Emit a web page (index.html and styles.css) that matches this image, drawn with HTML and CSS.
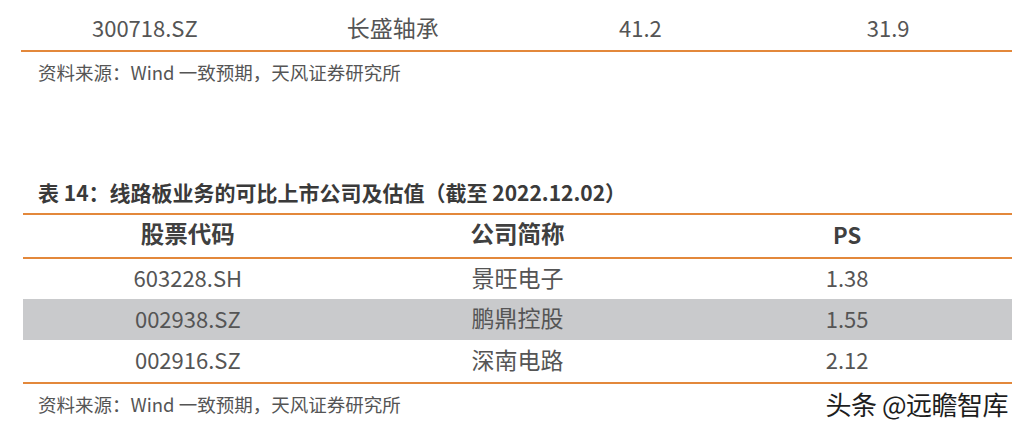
FILE: index.html
```html
<!DOCTYPE html>
<html lang="zh-CN">
<head>
<meta charset="utf-8">
<title>线路板业务的可比上市公司及估值</title>
<link rel="stylesheet" href="styles.css">
</head>
<body>
<div class="page">
  <div class="table t1">
    <div class="row">
      <div class="cell">300718.SZ</div>
      <div class="cell cn">长盛轴承</div>
      <div class="cell">41.2</div>
      <div class="cell">31.9</div>
    </div>
  </div>
  <div class="note">资料来源：Wind 一致预期，天风证券研究所</div>

  <div class="title">表 14：线路板业务的可比上市公司及估值（截至 2022.12.02）</div>
  <div class="table t2">
    <div class="row head">
      <div class="cell cn">股票代码</div>
      <div class="cell cn">公司简称</div>
      <div class="cell">PS</div>
    </div>
    <div class="row r1">
      <div class="cell">603228.SH</div>
      <div class="cell cn">景旺电子</div>
      <div class="cell">1.38</div>
    </div>
    <div class="row r2 shaded">
      <div class="cell">002938.SZ</div>
      <div class="cell cn">鹏鼎控股</div>
      <div class="cell">1.55</div>
    </div>
    <div class="row r3">
      <div class="cell">002916.SZ</div>
      <div class="cell cn">深南电路</div>
      <div class="cell">2.12</div>
    </div>
  </div>
  <div class="note">资料来源：Wind 一致预期，天风证券研究所</div>
  <div class="watermark">头条 @远瞻智库</div>
</div>
</body>
</html>
```

FILE: styles.css
```css
html, body {
  margin: 0;
  padding: 0;
  background: #ffffff;
}

body {
  font-family: "Noto Sans CJK SC", "Noto Sans", sans-serif;
  color: #555555;
  width: 1023px;
  height: 432px;
  overflow: hidden;
}

.page {
  position: relative;
  padding: 8px 11px 0 21px;
  height: 424px;
}

.table {
  display: flex;
  flex-direction: column;
}

.row {
  display: grid;
  align-items: center;
  font-size: 22px;
  line-height: 1;
  padding-bottom: 4px;
  box-sizing: border-box;
}

.cell {
  text-align: center;
}

.cn {
  font-size: 23px;
}

.t1 {
  width: 991px;
  border-bottom: 2px solid #e3883b;
}

.t1 .row {
  grid-template-columns: repeat(4, 1fr);
  height: 42px;
}

.note {
  height: 40px;
  display: flex;
  align-items: center;
  padding-left: 17px;
  font-size: 18.5px;
  color: #555555;
}

.title {
  margin-top: 86px;
  height: 28px;
  line-height: 28px;
  margin-bottom: 7px;
  padding-left: 17px;
  font-size: 21px;
  font-weight: 700;
  color: #3a3a3a;
}

.t2 {
  width: 989px;
  margin-left: 2px;
  border-top: 2px solid #e3883b;
  border-bottom: 2px solid #e3883b;
}

.t2 .row {
  grid-template-columns: repeat(3, 1fr);
}

.t2 .head {
  height: 44px;
  font-weight: 700;
  color: #404040;
  border-bottom: 2px solid #e3883b;
}

.t2 .head .cn {
  font-size: 23.5px;
}

.t2 .r1 { height: 40px; }
.t2 .r2 { height: 41px; }
.t2 .r3 { height: 42px; }

.shaded {
  background: #c9cacc;
}

.watermark {
  position: absolute;
  right: 15px;
  top: 390px;
  font-size: 26px;
  line-height: 28px;
  color: #1e1e1e;
  letter-spacing: -0.5px;
}
```
